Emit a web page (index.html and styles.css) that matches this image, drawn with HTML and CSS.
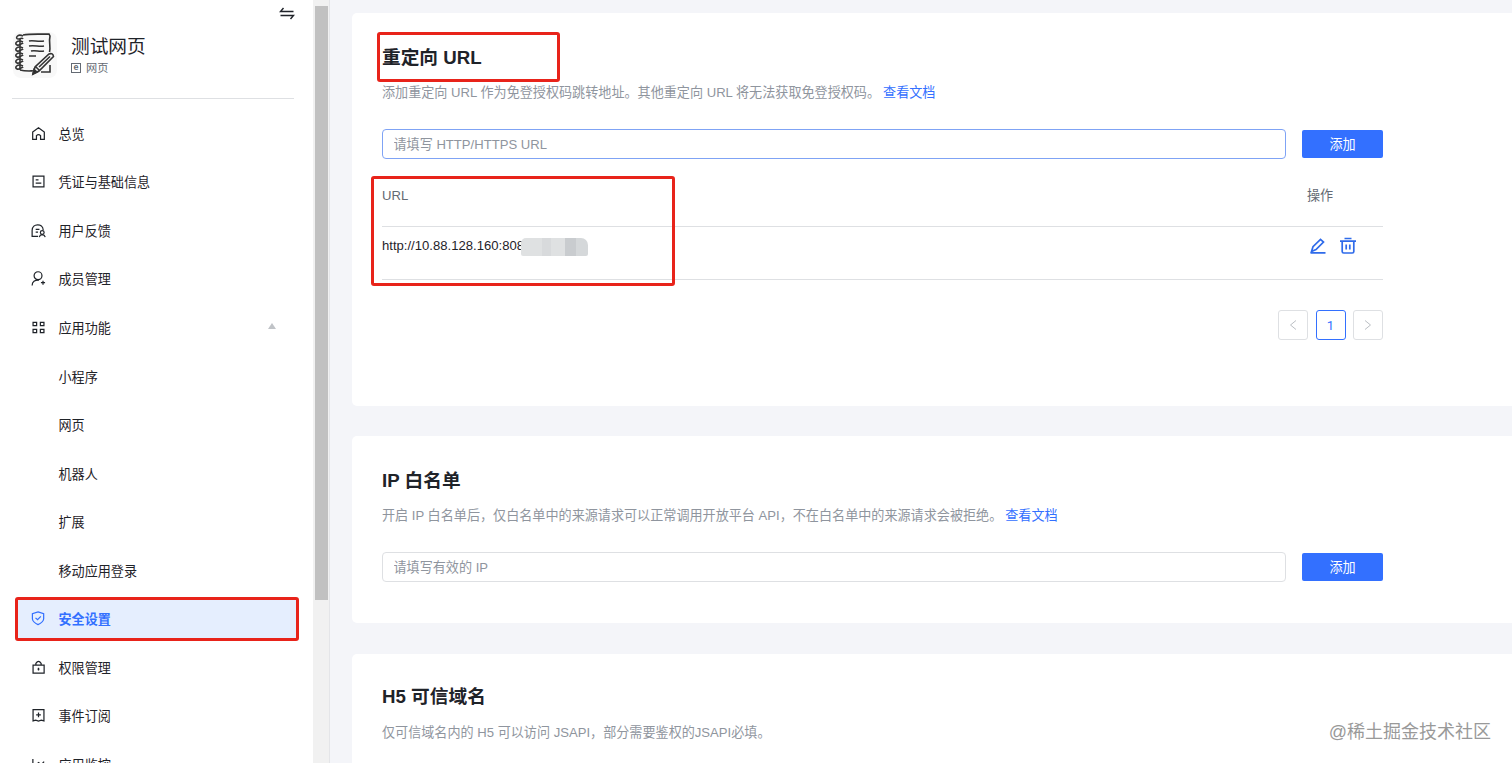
FILE: index.html
```html
<!DOCTYPE html>
<html lang="zh-CN">
<head>
    <meta charset="UTF-8">
    <meta name="viewport" content="width=device-width, initial-scale=1.0">
    <title>安全设置</title>
    <link rel="stylesheet" href="styles.css">
</head>
<body>
    <div class="layout">
        <aside class="sidebar">
            <div class="sidebar-content">
                <div class="collapse">
                    <svg width="16" height="14" viewBox="0 0 16 14"><path d="M14.500 4.500H1.500L4.500 1M1.500 8.500H14.500L11.500 12" /></svg>
                </div>
                <div class="app-info">
                    <svg class="app-logo" width="44" height="46" viewBox="0 0 44 46">
                        <rect class="logo-bg" width="44" height="46" rx="8" />
                        <path d="M10 3C18 1.500 29 2.500 36 2L37 4C35.500 11 38 14 36.500 20M7 7V38M7 38C15 40 22 38 20 39.500M37 33V40H28" />
                        <path d="M16 9C20 8 25 10 31 9M16 14C22 13 26 15 31 14M18 19C23 18 26 20 31 19M16 24H23" />
                        <path d="M10 4C4 1 2 7 5 7S9 5 10 7M10 10C4 7 1 12 4 13S9 10 10 12M10 16C4 13 1 18 4 19S9 16 10 18M10 22C4 19 1 24 4 25S9 22 10 24M10 28C4 25 1 30 4 31S9 28 10 30M10 34C4 31 1 36 4 37S9 34 10 36" />
                        <path class="pencil" d="M20 42L22 35L36 22Q40 20.500 40.500 24.500L26 39ZM23 35L26 38M26 35L37 24.500" />
                        <path class="pencil-tip" d="M20 42L21 37.500L24 40Z" />
                    </svg>
                    <div>
                        <div class="app-name">测试网页</div>
                        <div class="app-type"><span class="type-icon">e</span>网页</div>
                    </div>
                </div>
                <nav class="menu">
                    <div class="menu-item">
                        <svg viewBox="0 0 16 16"><path d="M1.800 6.400L8 1.800L14.200 6.400V14.200H10.200V10.200Q8 8 5.800 10.200V14.200H1.800Z" /></svg>
                        <span>总览</span>
                    </div>
                    <div class="menu-item">
                        <svg viewBox="0 0 16 16"><path d="M2.200 2.200H13.800V13.800H2.200ZM5 6.200H8M5 9.800H11" /></svg>
                        <span>凭证与基础信息</span>
                    </div>
                    <div class="menu-item">
                        <svg viewBox="0 0 16 16"><path d="M7.500 14.200H1.200V8C1.200 0 12.800 0 13 7.500M5 6.800H9M5 9.800H7.500M8.800 15Q9.500 12.500 11.800 12.300Q14.500 12.500 15.200 15" /><circle cx="12" cy="10.200" r="2" /></svg>
                        <span>用户反馈</span>
                    </div>
                    <div class="menu-item">
                        <svg viewBox="0 0 16 16"><circle cx="7.500" cy="5" r="4.200" /><path d="M1.200 15.500C1.200 11.500 4 9.500 8.500 9.800M12.800 10.300V14.700M10.600 12.500H15" /></svg>
                        <span>成员管理</span>
                    </div>
                    <div class="menu-item">
                        <svg viewBox="0 0 16 16"><path d="M2.200 2.500H6V6H2.200ZM10 2.500H13.800V6H10ZM2.200 10H6V13.500H2.200ZM10 10H13.800V13.500H10Z" /></svg>
                        <span>应用功能</span>
                        <i class="arrow-up"></i>
                    </div>
                    <div class="menu-item sub">小程序</div>
                    <div class="menu-item sub">网页</div>
                    <div class="menu-item sub">机器人</div>
                    <div class="menu-item sub">扩展</div>
                    <div class="menu-item sub">移动应用登录</div>
                    <div class="menu-item active">
                        <svg viewBox="0 0 16 16"><path d="M7.500 1L13.500 2.800V8.500Q13 12 7.500 14.500Q2 12 1.500 8.500V2.800ZM4.800 7.300L7 9.300L10.500 5.800" /></svg>
                        <span>安全设置</span>
                    </div>
                    <div class="menu-item">
                        <svg viewBox="0 0 16 16"><path d="M2.200 5.500H14V14H2.200ZM5.200 5.500V3.500Q8 -0.500 10.800 3.500V5.500M8 8.300V11.300M7 9.700H9" /></svg>
                        <span>权限管理</span>
                    </div>
                    <div class="menu-item">
                        <svg viewBox="0 0 16 16"><path d="M2.200 1.800H13.800V13.800L11 13L8 14L5 13L2.200 13.800ZM8 4.800V9.800M5.500 7.300H10.500" /></svg>
                        <span>事件订阅</span>
                    </div>
                    <div class="menu-item">
                        <svg viewBox="0 0 16 16"><path d="M2 2V14H14M5 9L8 6L11 8L14 5" /></svg>
                        <span>应用监控</span>
                    </div>
                </nav>
            </div>
            <div class="scrollbar"><div class="thumb"></div></div>
        </aside>

        <main class="main">
            <section class="card redirect-card">
                <h2>重定向 URL</h2>
                <p class="desc">添加重定向 URL 作为免登授权码跳转地址。其他重定向 URL 将无法获取免登授权码。<a>查看文档</a></p>
                <div class="form-row">
                    <input class="focused" type="text" placeholder="请填写 HTTP/HTTPS URL">
                    <button class="add-btn">添加</button>
                </div>
                <div class="table">
                    <div class="table-row table-head">
                        <span>URL</span>
                        <span class="col-action">操作</span>
                    </div>
                    <div class="table-row">
                        <span class="url">http://10.88.128.160:808<i class="mosaic"></i></span>
                        <span class="col-action icons">
                            <svg width="18" height="18" viewBox="0 0 18 18"><path d="M1.500 15.800H16.500M2.500 14.500L4 9.700L11.500 2.300L14.500 5L7 12.500L2.500 14.500Z" /></svg>
                            <svg width="18" height="18" viewBox="0 0 18 18"><path d="M1 4.200H17M5.500 1.500H12.500M3.200 4.500V14.500Q3.200 16 4.700 16H13.300Q14.800 16 14.800 14.500V4.500M7.200 7.500V12.500M10.800 7.500V12.500" /></svg>
                        </span>
                    </div>
                </div>
                <div class="pagination">
                    <span class="page"><svg width="8" height="12" viewBox="0 0 8 12"><path d="M7 1.500L1.500 6L7 10.500" /></svg></span>
                    <span class="page current">1</span>
                    <span class="page"><svg width="8" height="12" viewBox="0 0 8 12"><path d="M1 1.500L6.500 6L1 10.500" /></svg></span>
                </div>
            </section>

            <section class="card ip-card">
                <h2>IP 白名单</h2>
                <p class="desc">开启 IP 白名单后，仅白名单中的来源请求可以正常调用开放平台 API，不在白名单中的来源请求会被拒绝。<a>查看文档</a></p>
                <div class="form-row">
                    <input type="text" placeholder="请填写有效的 IP">
                    <button class="add-btn">添加</button>
                </div>
            </section>

            <section class="card h5-card">
                <h2>H5 可信域名</h2>
                <p class="desc">仅可信域名内的 H5 可以访问 JSAPI，部分需要鉴权的JSAPI必填。</p>
            </section>
        </main>
    </div>

    <div class="mark mark-title"></div>
    <div class="mark mark-table"></div>
    <div class="mark mark-menu"></div>
    <div class="watermark">@稀土掘金技术社区</div>
</body>
</html>
```
FILE: styles.css
```css
:root {
    --primary: #3370ff;
    --text: #1f2329;
    --muted: #8f959e;
    --border: #dee0e3;
    --page-bg: #f4f5f9;
    --mark: #e8231a;
}

* {
    box-sizing: border-box;
}

body {
    margin: 0;
    height: 763px;
    overflow: hidden;
    position: relative;
    font-family: "Liberation Sans", "Noto Sans CJK SC", sans-serif;
    font-size: 13.1px;
    color: var(--text);
    background: var(--page-bg);
}

svg {
    fill: none;
    stroke: currentColor;
    flex-shrink: 0;
}

.layout {
    display: flex;
    height: 763px;
    overflow: hidden;
}

/* sidebar */
.sidebar {
    width: 330px;
    flex-shrink: 0;
    display: flex;
    background: #fff;
    border-right: 1px solid #e4e5e8;
}

.sidebar-content {
    width: 313px;
    height: 763px;
    overflow: hidden;
}

.collapse {
    height: 28px;
    padding: 7px 18px 0 0;
    display: flex;
    justify-content: flex-end;
}

.collapse svg {
    stroke-width: 1.4;
}

.app-info {
    display: flex;
    gap: 14px;
    height: 71px;
    margin: 0 19px 0 12px;
    padding-top: 4px;
    border-bottom: 1px solid var(--border);
}

.app-logo {
    stroke: #333;
    stroke-width: 1.6;
    margin-left: 1px;
}

.app-logo .logo-bg {
    fill: #f8f8f8;
    stroke: none;
}

.app-logo .pencil {
    fill: #f8f8f8;
}

.app-logo .pencil-tip {
    fill: #222;
}

.app-name {
    padding-top: 1px;
    font-size: 18.7px;
    line-height: 27px;
}

.app-type {
    display: flex;
    align-items: center;
    gap: 5px;
    font-size: 11.2px;
    line-height: 16px;
    color: #646a73;
}

.type-icon {
    width: 10px;
    height: 10px;
    border: 1px solid #646a73;
    font-size: 9px;
    font-weight: bold;
    line-height: 7px;
    text-align: center;
}

.menu {
    padding-top: 10px;
}

.menu-item {
    display: flex;
    align-items: center;
    height: 48.55px;
    margin-left: 17px;
    padding-left: 14px;
    width: 281px;
}

.menu-item svg {
    width: 15px;
    height: 15px;
    margin-right: 12.500px;
    stroke-width: 1.3;
}

.menu-item.sub {
    padding-left: 41.500px;
}

.menu-item.active {
    height: 41px;
    margin-top: 4px;
    margin-bottom: 3.55px;
    background: #e5eefe;
    color: var(--primary);
    font-weight: bold;
}

.arrow-up {
    margin: 0 22px 3px auto;
    border: 4.5px solid transparent;
    border-top: 0;
    border-bottom: 6px solid #c0c3c7;
}

.scrollbar {
    width: 16px;
    padding: 6px 1px 0 2px;
    background: #f1f1f1;
}

.thumb {
    height: 594px;
    background: #c1c1c1;
}

/* content */
.main {
    flex: 1;
    padding: 13px 0 0 22px;
}

.card {
    background: #fff;
    border-radius: 5px 0 0 5px;
    padding: 31px 129px 0 30px;
    margin-bottom: 30px;
}

.redirect-card {
    height: 393px;
}

.ip-card {
    height: 187px;
    margin-bottom: 31px;
}

.h5-card {
    height: 180px;
    padding-top: 29px;
}

h2 {
    margin: 0;
    font-size: 18.7px;
    line-height: 28px;
}

.desc {
    margin: 10px 0 25px;
    line-height: 22px;
    color: var(--muted);
    white-space: nowrap;
}

.h5-card .desc {
    margin-top: 11px;
}

.desc a {
    margin-left: 3px;
    color: var(--primary);
}

.form-row {
    display: flex;
    align-items: center;
    gap: 16px;
    height: 30px;
}

input {
    flex: 1;
    height: 30px;
    padding: 0 10.500px;
    border: 1px solid var(--border);
    border-radius: 4px;
    font-family: inherit;
    font-size: 13.1px;
}

input.focused {
    border-color: #7fa3f5;
}

input::placeholder {
    color: var(--muted);
}

.add-btn {
    width: 81px;
    height: 28px;
    padding: 0 0 1px;
    border: none;
    border-radius: 2px;
    background: var(--primary);
    color: #fff;
    font-family: inherit;
    font-size: 13.1px;
}

.table-row {
    display: flex;
    justify-content: space-between;
    align-items: flex-start;
    height: 53px;
    padding-top: 9px;
    border-bottom: 1px solid var(--border);
}

.table-head {
    height: 68px;
    padding-top: 27px;
    color: #646a73;
}

.table-row span {
    line-height: 20px;
}

.col-action {
    width: 76px;
}

.icons {
    display: flex;
    gap: 12px;
    padding: 1px 0 0 2px;
    color: #2f6bea;
}

.icons svg {
    stroke-width: 1.7;
}

.url {
    display: flex;
    align-items: center;
}

.mosaic {
    width: 67px;
    height: 18px;
    margin: 2px 0 0 -3px;
    border-radius: 5px 7px 2px 2px;
    background: linear-gradient(90deg, #dfe1e2 0 32%, #d8dadc 32% 45%, #dfe1e2 45% 66%, #c9cccf 66% 82%, #d5d8da 82%);
}

.pagination {
    display: flex;
    justify-content: flex-end;
    gap: 7.500px;
    margin-top: 30px;
}

.page {
    display: flex;
    align-items: center;
    justify-content: center;
    width: 30px;
    height: 30px;
    border: 1px solid var(--border);
    border-radius: 3px;
    color: #bbbfc4;
}

.page.current {
    border-color: var(--primary);
    color: var(--primary);
    font-family: Roboto, sans-serif;
}

/* red highlight frames */
.mark {
    position: absolute;
    border: 3px solid var(--mark);
    border-radius: 3px;
    pointer-events: none;
}

.mark-title {
    left: 377px;
    top: 32px;
    width: 183px;
    height: 50px;
}

.mark-table {
    left: 371px;
    top: 176px;
    width: 304px;
    height: 110px;
}

.mark-menu {
    left: 15px;
    top: 597px;
    width: 284px;
    height: 44px;
}

.watermark {
    position: absolute;
    right: 21px;
    bottom: 17px;
    font-size: 18px;
    line-height: 27px;
    color: #999;
}
```
